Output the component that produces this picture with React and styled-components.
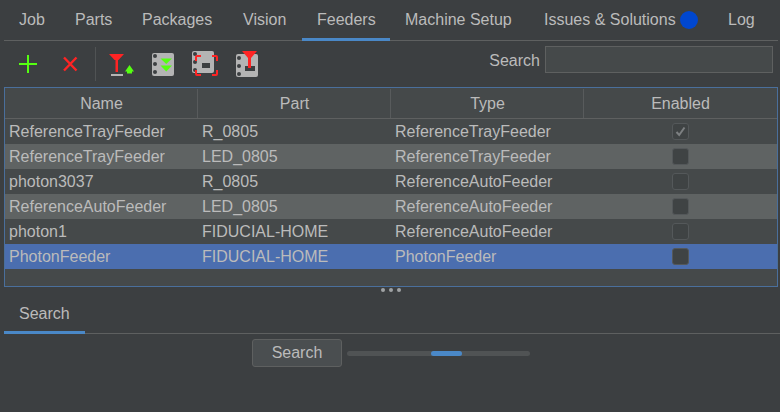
import React from 'react';
import styled, { createGlobalStyle } from 'styled-components';

const GlobalStyle = createGlobalStyle`
  html, body { margin: 0; padding: 0; background: #3c3f41; }
  body { font-family: "Liberation Sans", Arial, sans-serif; color: #bbbbbb; }
`;

const Page = styled.div`
  width: 780px;
  height: 412px;
  overflow: hidden;
  background: #3c3f41;
`;

const TabBar = styled.div`
  display: flex;
  height: 40px;
  margin: 0 2px 0 4px;
  border-bottom: 1px solid #5e6060;
`;

const Tab = styled.div`
  display: flex;
  align-items: center;
  gap: 4px;
  width: ${p => p.$width}px;
  padding: 2px 0 0 15px;
  font-size: 16px;
  color: #bbbbbb;
  white-space: nowrap;
  box-sizing: border-box;
  border-bottom: ${p => (p.$active ? '3px solid #4a88c7' : '3px solid transparent')};
  margin-bottom: -1px;
`;

const Dot = styled.span`
  width: 18px;
  height: 18px;
  border-radius: 50%;
  background: #0047d0;
`;

const Toolbar = styled.div`
  display: flex;
  align-items: center;
  height: 46px;
  padding-left: 8px;
  padding-right: 7px;
`;

const ToolButton = styled.div`
  display: flex;
  justify-content: center;
  width: 41px;
  height: 32px;
`;

const Separator = styled.div`
  width: 1px;
  height: 34px;
  margin: 0 5px;
  background: #505354;
`;

const SearchGroup = styled.div`
  display: flex;
  align-items: center;
  gap: 5px;
  margin: 0 0 9px auto;
  font-size: 16px;
`;

const SearchLabel = styled.label`
  padding-top: 2px;
`;

const SearchInput = styled.div`
  width: 228px;
  height: 27px;
  box-sizing: border-box;
  background: #45494a;
  border: 1px solid #5e6060;
`;

const Table = styled.div`
  margin: 0 2px 0 4px;
  height: 200px;
  box-sizing: border-box;
  background: #45494a;
  border: 1px solid #4a6f9c;
`;

const HeaderRow = styled.div`
  display: grid;
  grid-template-columns: repeat(4, 1fr);
  height: 31px;
  box-sizing: border-box;
  border-bottom: 1px solid #5e6060;
`;

const HeaderCell = styled.div`
  display: flex;
  align-items: center;
  justify-content: center;
  font-size: 16px;
  box-shadow: inset -1px 0 0 ${p => (p.$last ? 'transparent' : '#585b5c')};
  margin-top: 1px;
`;

const Row = styled.div`
  display: grid;
  grid-template-columns: repeat(4, 1fr);
  height: 25px;
  align-items: center;
  font-size: 16px;
  background: ${p => (p.$selected ? '#4b6eaf' : p.$alt ? '#5f6363' : 'transparent')};
`;

const Cell = styled.div`
  padding-left: 4px;
  white-space: nowrap;
`;

const CheckCell = styled.div`
  display: flex;
  justify-content: center;
`;

const CheckBox = styled.div`
  display: flex;
  align-items: center;
  justify-content: center;
  width: 17px;
  height: 17px;
  box-sizing: border-box;
  border-radius: 3px;
  background: #3f4344;
  border: 1px solid #54585a;
`;

const Splitter = styled.div`
  display: flex;
  justify-content: center;
  gap: 4px;
  height: 6px;
  padding-top: 1px;
  margin-left: 2px;
`;

const Grip = styled.span`
  width: 4px;
  height: 4px;
  border-radius: 50%;
  background: #a0a3a4;
`;

const BottomTabs = styled.div`
  display: flex;
  height: 39px;
  margin-left: 4px;
  border-bottom: 1px solid #5e6060;
`;

const BottomTab = styled.div`
  display: flex;
  align-items: center;
  width: 81px;
  box-sizing: border-box;
  padding: 2px 0 0 15px;
  font-size: 16px;
  border-bottom: 3px solid #4a88c7;
  margin-bottom: -1px;
`;

const SearchRow = styled.div`
  display: flex;
  align-items: center;
  gap: 5px;
  padding-left: 252px;
  margin-top: 5px;
`;

const SearchButton = styled.div`
  display: flex;
  align-items: center;
  justify-content: center;
  width: 90px;
  height: 28px;
  box-sizing: border-box;
  border: 1px solid #5e6060;
  border-radius: 3px;
  background: #4a4e50;
  font-size: 16px;
`;

const ProgressTrack = styled.div`
  display: flex;
  width: 183px;
  height: 5px;
  padding-left: 84px;
  box-sizing: border-box;
  border-radius: 3px;
  background: #505354;
`;

const ProgressThumb = styled.div`
  width: 31px;
  border-radius: 3px;
  background: #4a88c7;
`;

const Holes = ({ x, ys }) => ys.map(y => <circle key={y} cx={x} cy={y} r="2" fill="#3c3f41" />);

const IconSvg = styled.svg`
  display: block;
  width: 31px;
  height: 32px;
`;

const PlusIcon = () => (
  <IconSvg viewBox="0 0 31 32">
    <path d="M6 16H24M15 7V25" stroke="#55ff11" strokeWidth="2" fill="none" />
  </IconSvg>
);

const CrossIcon = () => (
  <IconSvg viewBox="0 0 31 32">
    <path d="M10 9.5L22.5 22.5M22.5 9.5L10 22.5" stroke="#ff2424" strokeWidth="2.4" fill="none" />
  </IconSvg>
);

const NozzleIcon = () => (
  <IconSvg viewBox="0 0 31 32">
    <polygon points="3,6 18,6 12.5,12 8.5,12" fill="#ff2424" />
    <rect x="9.5" y="12" width="2.5" height="12" fill="#ff2424" />
    <rect x="5" y="26" width="12" height="2" fill="#b4b4b4" />
    <polygon points="19,23.5 23.5,17 28,23.5 26,23.5 26,25.5 21,25.5 21,23.5" fill="#55ff11" />
  </IconSvg>
);

const FeedIcon = () => (
  <IconSvg viewBox="0 0 31 32">
    <rect x="5" y="5" width="22" height="23" rx="2" fill="#b4b4b4" />
    <Holes x={8} ys={[8, 16, 24]} />
    <polygon points="13.5,10.5 25,10.5 19.25,16" fill="#55ff11" />
    <polygon points="13.5,17.5 25,17.5 19.25,23.5" fill="#55ff11" />
  </IconSvg>
);

const AlignIcon = () => (
  <IconSvg viewBox="0 0 31 32">
    <rect x="4" y="3" width="22" height="22" rx="2" fill="#b4b4b4" />
    <Holes x={7} ys={[6, 14, 22]} />
    <rect x="14" y="15" width="8" height="5" fill="#3c3f41" />
    <path d="M8 13V9Q8 8 9 8H13M24 8H28Q29 8 29 9V13M29 22V26Q29 27 28 27H24M13 27H9Q8 27 8 26V22" stroke="#ff2424" strokeWidth="2" fill="none" />
  </IconSvg>
);

const PickIcon = () => (
  <IconSvg viewBox="0 0 31 32">
    <rect x="7" y="6" width="22" height="23" rx="2" fill="#b4b4b4" />
    <Holes x={10} ys={[10, 18, 26]} />
    <rect x="16" y="18" width="10" height="5" fill="#3c3f41" />
    <polygon points="13,3 28,3 22,10 19,10" fill="#ff2424" />
    <rect x="19" y="9" width="3" height="11" fill="#ff2424" />
  </IconSvg>
);

const rows = [
  ['ReferenceTrayFeeder', 'R_0805', 'ReferenceTrayFeeder', true],
  ['ReferenceTrayFeeder', 'LED_0805', 'ReferenceTrayFeeder', false],
  ['photon3037', 'R_0805', 'ReferenceAutoFeeder', false],
  ['ReferenceAutoFeeder', 'LED_0805', 'ReferenceAutoFeeder', false],
  ['photon1', 'FIDUCIAL-HOME', 'ReferenceAutoFeeder', false],
  ['PhotonFeeder', 'FIDUCIAL-HOME', 'PhotonFeeder', false],
];

const tabs = [
  ['Job', 56],
  ['Parts', 67],
  ['Packages', 101],
  ['Vision', 74],
  ['Feeders', 88],
  ['Machine Setup', 139],
  ['Issues & Solutions', 184],
  ['Log', 60],
];

const App = () => (
  <Page>
    <GlobalStyle />
    <TabBar>
      {tabs.map(([t, w]) => (
        <Tab key={t} $width={w} $active={t === 'Feeders'}>
          {t}
          {t.startsWith('Issues') && <Dot />}
        </Tab>
      ))}
    </TabBar>
    <Toolbar>
      <ToolButton><PlusIcon /></ToolButton>
      <ToolButton><CrossIcon /></ToolButton>
      <Separator />
      <ToolButton><NozzleIcon /></ToolButton>
      <ToolButton><FeedIcon /></ToolButton>
      <ToolButton><AlignIcon /></ToolButton>
      <ToolButton><PickIcon /></ToolButton>
      <SearchGroup>
        <SearchLabel>Search</SearchLabel>
        <SearchInput />
      </SearchGroup>
    </Toolbar>
    <Table>
      <HeaderRow>
        <HeaderCell>Name</HeaderCell>
        <HeaderCell>Part</HeaderCell>
        <HeaderCell>Type</HeaderCell>
        <HeaderCell $last>Enabled</HeaderCell>
      </HeaderRow>
      {rows.map(([name, part, type, enabled], i) => (
        <Row key={i} $alt={i % 2 === 1} $selected={i === 5}>
          <Cell>{name}</Cell>
          <Cell>{part}</Cell>
          <Cell>{type}</Cell>
          <CheckCell>
            <CheckBox>
              {enabled && (
                <svg width="13" height="13" viewBox="0 0 13 13">
                  <path d="M2.5 7L5.2 10L10.5 2.5" stroke="#7d8082" strokeWidth="2" fill="none" />
                </svg>
              )}
            </CheckBox>
          </CheckCell>
        </Row>
      ))}
    </Table>
    <Splitter>
      <Grip /><Grip /><Grip />
    </Splitter>
    <BottomTabs>
      <BottomTab>Search</BottomTab>
    </BottomTabs>
    <SearchRow>
      <SearchButton>Search</SearchButton>
      <ProgressTrack><ProgressThumb /></ProgressTrack>
    </SearchRow>
  </Page>
);

export default App;
